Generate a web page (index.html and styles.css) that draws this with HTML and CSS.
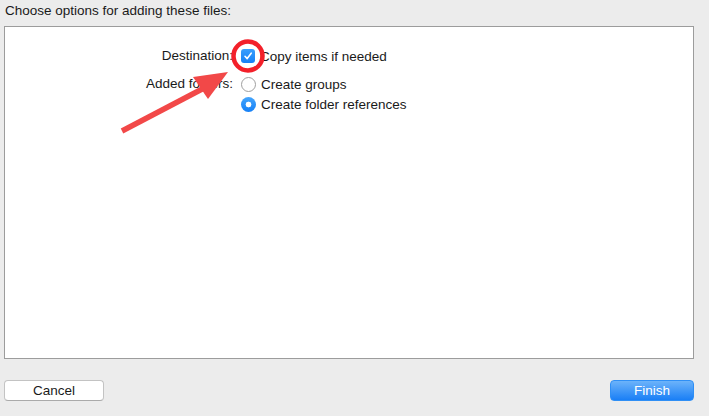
FILE: index.html
```html
<!DOCTYPE html>
<html>
<head>
<meta charset="utf-8">
<link rel="stylesheet" href="styles.css">
</head>
<body>
<div class="sheet">
  <div class="title">Choose options for adding these files:</div>
  <div class="panel">
    <div class="form">
      <div class="label">Destination:</div>
      <div class="control">
        <span class="checkbox"><svg width="10" height="10" viewBox="0 0 10 10"><path d="M2 5.3 L4.2 7.6 L8.2 2.2" fill="none" stroke="#fff" stroke-width="1.6" stroke-linecap="round" stroke-linejoin="round"/></svg></span>
        <span class="text">Copy items if needed</span>
      </div>
      <div class="label">Added folders:</div>
      <div class="control-stack">
        <div class="control"><span class="radio"></span><span class="text">Create groups</span></div>
        <div class="control"><span class="radio on"></span><span class="text">Create folder references</span></div>
      </div>
    </div>
  </div>
  <div class="buttons">
    <button class="btn cancel">Cancel</button>
    <button class="btn finish">Finish</button>
  </div>
  <svg class="annot" width="709" height="416" viewBox="0 0 709 416">
    <circle cx="248" cy="56" r="14.5" fill="none" stroke="#f3202a" stroke-width="4.5"/>
    <line x1="122" y1="131" x2="206" y2="87" stroke="#f24848" stroke-width="5.5"/>
    <polygon points="193,77 228,72 208,99" fill="#f24848"/>
  </svg>
</div>
</body>
</html>
```

FILE: styles.css
```css
html, body {
  margin: 0;
  padding: 0;
  background: #ececec;
  font-family: "Liberation Sans", Arial, sans-serif;
  font-size: 13.5px;
  color: #1a1a1a;
}
.sheet {
  position: relative;
  width: 709px;
  height: 416px;
  overflow: hidden;
}
.title {
  padding: 3px 0 0 5px;
  height: 21px;
  line-height: 16px;
}
.panel {
  margin: 2px 15px 0 4px;
  height: 331px;
  background: #fff;
  border: 1px solid #9c9c9c;
}
.form {
  display: grid;
  grid-template-columns: 228px auto;
  column-gap: 8px;
  row-gap: 12px;
  padding-top: 21px;
}
.label {
  text-align: right;
  line-height: 16px;
}
.control-stack {
  display: flex;
  flex-direction: column;
  gap: 4px;
}
.control {
  display: flex;
  align-items: center;
  gap: 5px;
  height: 16px;
}
.checkbox {
  width: 14px;
  height: 14px;
  border-radius: 3px;
  background: linear-gradient(#3a9ffc, #1680f6);
  display: flex;
  align-items: center;
  justify-content: center;
}
.radio {
  width: 13px;
  height: 13px;
  border-radius: 50%;
  border: 1px solid #9f9f9f;
  background: #fff;
  box-sizing: content-box;
}
.radio.on {
  width: 15px;
  height: 15px;
  border: none;
  background: radial-gradient(circle, #fff 0 2.6px, transparent 3.2px), linear-gradient(#45a6fd, #1680f6);
}
.buttons {
  display: flex;
  justify-content: space-between;
  margin: 21px 15px 0 4px;
}
.btn {
  height: 21px;
  border-radius: 4px;
  font-family: "Liberation Sans", Arial, sans-serif;
  font-size: 13.5px;
  padding: 0;
  line-height: 19px;
}
.cancel {
  width: 100px;
  background: #fff;
  border: 1px solid #c3c3c3;
  border-bottom-color: #aaa;
  color: #1a1a1a;
}
.finish {
  width: 84px;
  border: 1px solid #2f8ff5;
  background: linear-gradient(#6cb3fa, #1a7ff6);
  color: #fff;
}
.annot {
  position: absolute;
  left: 0;
  top: 0;
  pointer-events: none;
}
```
